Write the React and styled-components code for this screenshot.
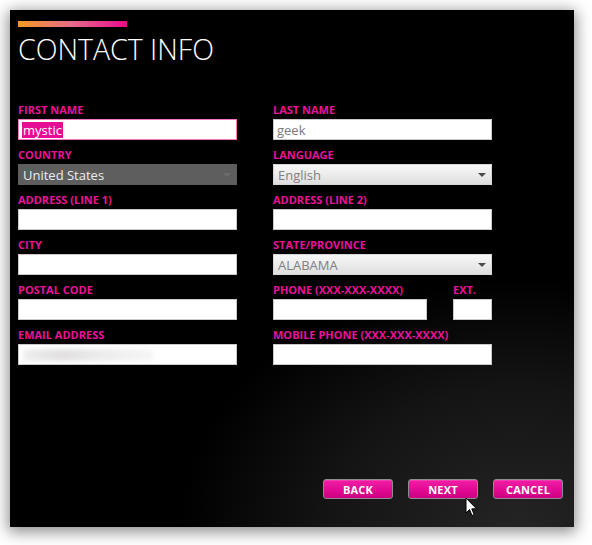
import React from "react";
import styled, { createGlobalStyle } from "styled-components";

const Global = createGlobalStyle`
  html, body { margin: 0; padding: 0; background: #fff; }
  body { font-family: "Open Sans", "Noto Sans", sans-serif; }
  * { box-sizing: border-box; }
`;

const Page = styled.div`
  width: 592px;
  height: 545px;
  padding: 10px 0 0 10px;
  background: #fff;
`;

const Window = styled.div`
  position: relative;
  width: 564px;
  height: 517px;
  padding: 11px 8px 0 8px;
  background: radial-gradient(ellipse 75% 60% at 90% 100%, #242424 0%, #141414 45%, #000 80%);
  box-shadow: 0 3px 14px 2px rgba(0, 0, 0, 0.45);
  display: flex;
  flex-direction: column;
`;

const AccentBar = styled.div`
  width: 109px;
  height: 6px;
  background: linear-gradient(90deg, #f49a23 0%, #e56a8a 50%, #ec0a8c 100%);
`;

const Title = styled.h1`
  margin: 4px 0 0 0;
  font-family: "Open Sans", sans-serif;
  font-weight: 300;
  font-size: 28.5px;
  line-height: 36px;
  color: #fff;
`;

const Form = styled.div`
  margin-top: 36px;
  display: grid;
  grid-template-columns: 219px 219px;
  column-gap: 36px;
  row-gap: 8px;
`;

const Field = styled.div`
  display: flex;
  flex-direction: column;
`;

const Label = styled.label`
  font-family: "Open Sans", sans-serif;
  font-weight: 700;
  font-size: 11px;
  line-height: 14px;
  height: 14px;
  margin-bottom: 2px;
  color: #e8129b;
  white-space: nowrap;
`;

const Input = styled.div`
  height: 21px;
  width: ${(p) => p.$w || "100%"};
  background: #fff;
  border: 1px solid ${(p) => (p.$focus ? "#f27ac4" : "#c9c9c9")};
  padding: 0 3px;
  display: flex;
  align-items: center;
  font-family: "Open Sans", sans-serif;
  font-size: 13px;
  color: #7a7a7a;
  overflow: hidden;
`;

const Selected = styled.span`
  background: #e60c94;
  color: #fff;
  line-height: 16px;
  padding: 0 1px;
`;

const Blur = styled.span`
  display: block;
  width: 130px;
  height: 12px;
  margin-left: 1px;
  background: linear-gradient(90deg, #efefef 0%, #e2e0e0 30%, #ececec 60%, #f6f6f6 100%);
  filter: blur(2px);
`;

const Select = styled.div`
  height: 21px;
  display: flex;
  align-items: center;
  justify-content: space-between;
  padding: 0 5px 0 4px;
  font-family: "Open Sans", sans-serif;
  font-size: 13px;
  border: 1px solid ${(p) => (p.$dark ? "#5c5c5c" : "#d6d6d6")};
  background: ${(p) =>
    p.$dark ? "#5e5e5e" : "linear-gradient(180deg, #f7f7f7 0%, #ececec 50%, #dedede 100%)"};
  color: ${(p) => (p.$dark ? "#ececec" : "#808080")};
`;

const Arrow = styled.span`
  width: 0;
  height: 0;
  border-left: 4px solid transparent;
  border-right: 4px solid transparent;
  border-top: 4px solid ${(p) => (p.$dark ? "#6c6c6c" : "#4a4a4a")};
`;

const PhoneRow = styled.div`
  display: flex;
  gap: 26px;
`;

const Footer = styled.div`
  margin-top: auto;
  margin-bottom: 27px;
  display: flex;
  justify-content: flex-end;
  gap: 15px;
  padding-right: 3px;
`;

const Button = styled.button`
  width: 70px;
  height: 20px;
  margin-bottom: 1px;
  border: 1px solid #8d8d8d;
  border-radius: 3px;
  background: linear-gradient(180deg, #f21ea6 0%, #e20a93 55%, #cc0080 100%);
  color: #fff;
  font-family: "Open Sans", sans-serif;
  font-weight: 700;
  font-size: 11px;
  letter-spacing: 0.2px;
  padding: 0;
  box-shadow: inset 0 1px 0 rgba(255, 255, 255, 0.15);
`;

const Cursor = styled.svg`
  position: absolute;
  left: 455px;
  top: 487px;
`;

const Pick = ({ label, value, dark }) => (
  <Field>
    <Label>{label}</Label>
    <Select $dark={dark}>
      <span>{value}</span>
      <Arrow $dark={dark} />
    </Select>
  </Field>
);

export default function App() {
  return (
    <Page>
      <Global />
      <Window>
        <AccentBar />
        <Title>CONTACT INFO</Title>
        <Form>
          <Field>
            <Label>FIRST NAME</Label>
            <Input $focus>
              <Selected>mystic</Selected>
            </Input>
          </Field>
          <Field>
            <Label>LAST NAME</Label>
            <Input>geek</Input>
          </Field>
          <Pick label="COUNTRY" value="United States" dark />
          <Pick label="LANGUAGE" value="English" />
          <Field>
            <Label>ADDRESS (LINE 1)</Label>
            <Input />
          </Field>
          <Field>
            <Label>ADDRESS (LINE 2)</Label>
            <Input />
          </Field>
          <Field>
            <Label>CITY</Label>
            <Input />
          </Field>
          <Pick label="STATE/PROVINCE" value="ALABAMA" />
          <Field>
            <Label>POSTAL CODE</Label>
            <Input />
          </Field>
          <PhoneRow>
            <Field>
              <Label>PHONE (XXX-XXX-XXXX)</Label>
              <Input $w="154px" />
            </Field>
            <Field>
              <Label>EXT.</Label>
              <Input $w="39px" />
            </Field>
          </PhoneRow>
          <Field>
            <Label>EMAIL ADDRESS</Label>
            <Input>
              <Blur />
            </Input>
          </Field>
          <Field>
            <Label>MOBILE PHONE (XXX-XXX-XXXX)</Label>
            <Input />
          </Field>
        </Form>
        <Footer>
          <Button>BACK</Button>
          <Button>NEXT</Button>
          <Button>CANCEL</Button>
        </Footer>
        <Cursor width="13" height="21" viewBox="0 0 13 21">
          <path d="M1 1 L1 16 L4.5 12.5 L7 18.5 L9.2 17.6 L6.8 11.8 L11.5 11.8 Z" fill="#fff" stroke="#000" strokeWidth="1" strokeLinejoin="round" />
        </Cursor>
      </Window>
    </Page>
  );
}
